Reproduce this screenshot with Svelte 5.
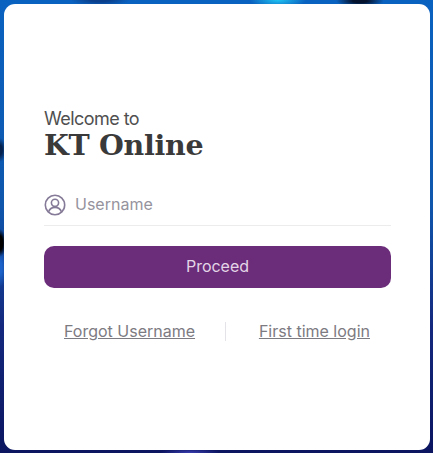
<script>
	let username = $state('');

	function onSubmit(event) {
		event.preventDefault();
	}
</script>

<main class="page">
	<form class="card" onsubmit={onSubmit}>
		<h1 class="heading">
			<span class="welcome">Welcome to</span>
			<span class="brand">KT Online</span>
		</h1>

		<label class="field">
			<svg class="user-icon" aria-hidden="true" viewBox="0 0 22 22" fill="none" stroke="#857a97" stroke-width="1.6">
				<circle cx="11" cy="11" r="9.7"></circle>
				<circle cx="11" cy="8.8" r="3.6"></circle>
				<path d="M4.6 17.8c1-3 3.4-4.4 6.4-4.4s5.4 1.4 6.4 4.4"></path>
			</svg>
			<input class="input" type="text" placeholder="Username" bind:value={username} />
		</label>

		<button class="proceed" type="submit">Proceed</button>

		<div class="links">
			<a class="link" href="#forgot">Forgot Username</a>
			<span class="divider"></span>
			<a class="link" href="#first">First time login</a>
		</div>
	</form>
</main>

<style>
	:global(body) {
		margin: 0;
	}

	.page {
		box-sizing: border-box;
		height: 453px;
		padding: 4px 3px 3px 4px;
		background:
			radial-gradient(ellipse 28px 8px at 278px 0, #1fc4f2 0, transparent 100%),
			radial-gradient(ellipse 24px 6px at 360px 1px, #04122e 30%, transparent 100%),
			radial-gradient(ellipse 30px 6px at 100px 0, #0a3f8c 30%, transparent 100%),
			radial-gradient(ellipse 30px 5px at 190px 453px, #3a3cb0 0, transparent 100%),
			radial-gradient(ellipse 6px 12px at 0 150px, #06234f 40%, transparent 100%),
			radial-gradient(ellipse 6px 14px at 0 243px, #000 50%, transparent 100%),
			radial-gradient(ellipse 7px 20px at 0 268px, #1c62c8 30%, transparent 100%),
			linear-gradient(180deg, #0a62c0 0%, #0f57ad 45%, #14297e 72%, #0b1560 100%);
	}

	.card {
		box-sizing: border-box;
		height: 446px;
		padding: 104px 39px 0 40px;
		background: #fff;
		border-radius: 11px;
		font-family: Inter, "Liberation Sans", sans-serif;
	}

	.heading {
		display: flex;
		flex-direction: column;
		margin: 0;
		font-weight: 400;
	}

	.welcome {
		font-size: 18px;
		line-height: 21px;
		letter-spacing: -0.55px;
		color: #505050;
	}

	.brand {
		font-family: "DejaVu Serif", "Liberation Serif", serif;
		font-size: 28.5px;
		line-height: 32px;
		font-weight: 700;
		letter-spacing: -0.3px;
		color: #3a3a3a;
	}

	.field {
		display: flex;
		align-items: center;
		gap: 9px;
		height: 41px;
		margin-top: 23px;
		border-bottom: 1px solid #ececec;
	}

	.user-icon {
		flex: none;
		width: 22px;
		height: 22px;
	}

	.input {
		flex: 1;
		min-width: 0;
		border: none;
		outline: none;
		padding: 0 0 2px;
		font: inherit;
		font-size: 16px;
		color: #333;
	}

	.input::placeholder {
		color: #96939d;
		opacity: 1;
	}

	.proceed {
		display: block;
		width: 100%;
		height: 42px;
		margin-top: 20px;
		padding: 0 0 2px;
		border: none;
		border-radius: 10px;
		background: #6b2c7a;
		color: #e3d6e6;
		font: inherit;
		font-size: 16px;
		cursor: pointer;
	}

	.links {
		display: flex;
		align-items: center;
		justify-content: space-between;
		margin-top: 33px;
		padding: 0 21px 0 20px;
	}

	.link {
		color: #7d7b82;
		font-size: 16px;
		line-height: 20px;
		text-decoration: underline;
	}

	.divider {
		width: 1px;
		height: 19px;
		margin-right: 3px;
		background: #e4e4e8;
	}
</style>
